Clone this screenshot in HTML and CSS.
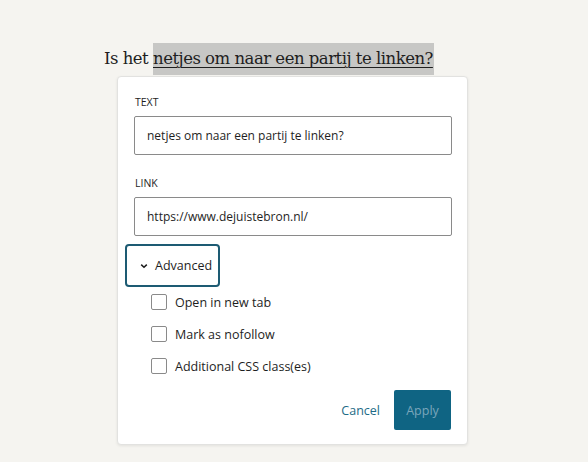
FILE: index.html
```html
<!DOCTYPE html>
<html>
<head>
<meta charset="utf-8">
<link rel="stylesheet" href="styles.css">
</head>
<body>
<div class="page">
  <p class="para">Is het <span class="hl">netjes om naar een partij te linken?</span></p>
  <div class="popover">
    <label class="lbl">TEXT</label>
    <div class="input">netjes om naar een partij te linken?</div>
    <label class="lbl lbl2">LINK</label>
    <div class="input">https://www.dejuistebron.nl/</div>
    <button class="adv">
      <svg width="10" height="10" viewBox="0 0 10 10"><path d="M2.2 3.6 L5 6.3 L7.8 3.6" fill="none" stroke="#1e1e1e" stroke-width="1.5"/></svg>
      <span>Advanced</span>
    </button>
    <div class="checks">
      <div class="check"><span class="box"></span><span>Open in new tab</span></div>
      <div class="check"><span class="box"></span><span>Mark as nofollow</span></div>
      <div class="check"><span class="box"></span><span>Additional CSS class(es)</span></div>
    </div>
    <div class="actions">
      <span class="cancel">Cancel</span>
      <span class="apply">Apply</span>
    </div>
  </div>
</div>
</body>
</html>
```
FILE: styles.css
```css
html, body { margin: 0; padding: 0; }
body { background: #f5f4f0; width: 588px; height: 462px; overflow: hidden; }
.page { padding-top: 43px; padding-left: 104px; }
.para {
  margin: 0;
  font-family: "DejaVu Serif", Georgia, serif;
  font-size: 16.5px;
  line-height: 32px;
  height: 33px;
  color: #1e1e1e;
  letter-spacing: -0.5px;
}
.hl { background: #c7c7c5; text-decoration: underline; text-underline-offset: 3px; text-decoration-thickness: 1px; display: inline-block; padding-right: 1px; }
.popover {
  margin-left: 13px;
  width: 351px;
  height: 369px;
  box-sizing: border-box;
  background: #fff;
  border: 1px solid #e2e2e0;
  border-radius: 4px;
  box-shadow: 0 1px 3px rgba(0,0,0,0.08);
  padding: 18px 16px 0 16px;
  font-family: "Open Sans", "Noto Sans", sans-serif;
  color: #1e1e1e;
}
.lbl { display: block; font-size: 10.5px; line-height: 14px; height: 14px; margin-left: 1px; color: #1e1e1e; }
.lbl2 { margin-top: 21px; }
.input {
  margin-top: 7px;
  width: 318px;
  height: 39px;
  box-sizing: border-box;
  border: 1px solid #8a8a8a;
  border-radius: 2px;
  padding: 0 12px;
  font-size: 12px;
  line-height: 37px;
}
.adv {
  margin-top: 8px;
  margin-left: -9px;
  width: 95px;
  height: 43px;
  box-sizing: border-box;
  border: 2px solid #1d5b73;
  border-radius: 4px;
  background: #fff;
  display: flex;
  align-items: center;
  gap: 6px;
  padding: 0 0 0 12px;
  font-family: "Open Sans", "Noto Sans", sans-serif;
  font-size: 12.5px;
  color: #1e1e1e;
}
.checks { display: flex; flex-direction: column; gap: 16px; margin-top: 7px; margin-left: 17px; }
.check { display: flex; align-items: center; gap: 8px; font-size: 12.5px; height: 16px; }
.box { width: 16px; height: 16px; box-sizing: border-box; border: 1px solid #8a8a8a; border-radius: 2px; flex: none; }
.actions { display: flex; justify-content: flex-end; align-items: center; margin-top: 16px; gap: 14px; }
.cancel { color: #1d6b86; font-size: 12.5px; }
.apply {
  width: 57px; height: 40px; background: #0f6483; color: #7aa6bb;
  border-radius: 2px; display: flex; align-items: center; justify-content: center; font-size: 12.5px;
}
```
